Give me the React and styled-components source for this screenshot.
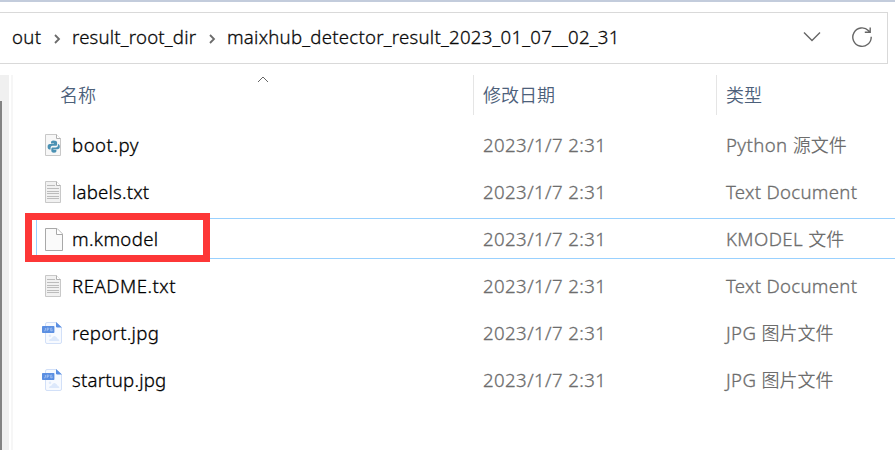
import React from "react";
import styled, { createGlobalStyle } from "styled-components";

const GlobalStyle = createGlobalStyle`
  * { box-sizing: border-box; }
  body {
    margin: 0;
    background: #fff;
    overflow: hidden;
    font-family: "Noto Sans", "Noto Sans CJK SC", sans-serif;
    font-size: 18.6px;
    font-weight: 350;
    -webkit-text-stroke-width: 0.3px;
  }
`;

const Window = styled.div`
  height: 450px;
  display: flex;
  flex-direction: column;
  border-top: 2px solid #c3ccdc;
`;

const AddressBar = styled.nav`
  height: 52px;
  margin: 10px 7px 0 0;
  padding-left: 12px;
  border: 1px solid #d9d9d9;
  border-left: 0;
  display: flex;
  align-items: center;
  color: #0a0a0a;
`;

const Crumb = styled.span`
  width: ${(p) => p.$width}px;
  line-height: 26px;
  margin-top: -2px;
  white-space: nowrap;
  letter-spacing: ${(p) => p.$spacing || 0}px;
`;

const CrumbArrow = styled.svg`
  width: 8px;
  height: 12px;
  flex: none;
  margin: 2px 11px 0 12px;
`;

const BarActions = styled.div`
  margin-left: auto;
  display: flex;
  align-items: center;
  gap: 30px;
  padding-right: 14px;
  margin-top: -2px;
`;

const Body = styled.div`
  flex: 1;
  margin-top: 11px;
  display: flex;
`;

const ScrollTrack = styled.div`
  width: 9px;
  padding-top: 26px;
  background: #f0f0f0;
  display: flex;
`;

const ScrollThumb = styled.div`
  width: 2px;
  background: #838383;
`;

const Divider = styled.div`
  width: 2px;
  margin-left: 2px;
  background: #f6f6f6;
`;

const Files = styled.main`
  flex: 1;
  padding-left: 23px;
`;

const Header = styled.div`
  height: 40px;
  display: grid;
  grid-template-columns: 437px 243px 1fr;
  color: #4c607a;
  font-size: 18px;
`;

const HeaderCell = styled.div`
  padding-left: ${(p) => (p.$first ? 24 : 9)}px;
  border-left: ${(p) => (p.$first ? 0 : 1)}px solid #e5e5e5;
  line-height: 38px;
  display: flex;
`;

const SortMark = styled.svg`
  width: 12px;
  height: 7px;
  margin-left: 161px;
  margin-top: 1px;
`;

const List = styled.div`
  display: flex;
  flex-direction: column;
  gap: 6px;
  padding-top: 9px;
`;

const Row = styled.div`
  position: relative;
  height: 41px;
  display: grid;
  grid-template-columns: 436px 243px 1fr;
  border: 1px solid ${(p) => (p.$selected ? "#99d1ff" : "transparent")};
  border-right: 0;
  color: #6d6d6d;
`;

const Cell = styled.div`
  padding-left: 10px;
  line-height: 39px;
  white-space: nowrap;
  letter-spacing: ${(p) => p.$spacing || 0}px;
`;

const NameCell = styled.div`
  display: flex;
  align-items: center;
  padding-left: 5px;
  color: #000;
`;

const FileIcon = styled.svg`
  width: 22px;
  height: 24px;
  margin-right: 8px;
`;

const FileName = styled.span`
  line-height: 39px;
  letter-spacing: ${(p) => p.$spacing || 0}px;
`;

const Chinese = styled.span`
  font-family: "Noto Sans CJK SC", sans-serif;
  font-size: 18px;
  letter-spacing: 0;
  -webkit-text-stroke-width: 0;
`;

const Highlight = styled.div`
  position: absolute;
  left: -12px;
  top: -6px;
  width: 185px;
  height: 49px;
  border: 7px solid #fd3737;
`;

function Page({ fill = "#f7f7f7" }) {
  return (
    <>
      <path d="M3.5 1.5H14.5L18.5 5.5V22.5H3.5Z" fill={fill} stroke="#c8c8c8" />
      <path d="M14.5 1.5V5.5H18.5" fill="#fff" stroke="#b0b0b0" />
    </>
  );
}

function Icon({ kind }) {
  if (kind === "jpg") {
    return (
      <FileIcon viewBox="0 0 22 24">
        <path d="M3.5 3Q3.5 1.5 5 1.5H14.5L19.5 6.5V21Q19.5 22.5 18 22.5H5Q3.5 22.5 3.5 21Z" fill="#f7faff" stroke="#d2e0f8" />
        <path d="M14 1L20 6.5H15.3Q14 6.5 14 5.2Z" fill="#5b8fe2" />
        <circle cx="8" cy="14.7" r="1.3" fill="#dfeafc" />
        <path d="M7 20Q7 17.8 9.5 17.4Q11 14 13.2 15.2Q15 16 15.4 17.5Q17.4 18 17.4 20Z" fill="#dce8fb" />
        <rect x="0" y="5" width="12.4" height="7" rx="0.7" fill="#5b8fe2" />
        <path d="M3.4 7V9.4Q3.4 10 2.2 9.8M5.2 10V7H6.4Q7.5 7.8 6.4 8.5H5.4M10.2 7.2H8.7V9.8H10.2V8.6H9.6" fill="none" stroke="#b8d0f6" strokeWidth="0.7" />
      </FileIcon>
    );
  }
  if (kind === "py") {
    return (
      <FileIcon viewBox="0 0 22 24">
        <Page />
        <g fill="#4a91b3" transform="translate(5.6 7.6)">
          <path d="M6 0C3.6 0 3.4 1 3.4 2V3H6.4V3.5H2.2C.8 3.5 0 4.5 0 6.2S.8 8.8 1.9 8.8H3V7.3C3 6 4 5.2 5 5.2H8C9 5.2 9.5 4.5 9.5 3.6V2C9.5 .8 8.2 0 6 0Z" />
          <path d="M6.2 12.2C8.6 12.2 8.8 11.2 8.8 10.2V9.2H5.8V8.7H10C11.4 8.7 12.2 7.7 12.2 6S11.4 3.4 10.3 3.4V5C10.3 6.2 9.2 7 8.2 7H5.2C4.2 7 3.7 7.7 3.7 8.6V10.2C3.7 11.4 4.8 12.2 6.2 12.2Z" />
        </g>
      </FileIcon>
    );
  }
  if (kind === "txt") {
    return (
      <FileIcon viewBox="0 0 22 24">
        <Page fill="#f1f1f1" />
        <path d="M5 5.5H13M5 8.5H17M5 11.5H17M5 13.5H17M5 16.5H17M5 18.5H17" stroke="#bcbcbc" />
      </FileIcon>
    );
  }
  return (
    <FileIcon viewBox="0 0 22 24">
      <path d="M3.5 1.5H15L20.5 7V23.5H3.5Z" fill="#fafafa" stroke="#a8a8a8" />
      <path d="M14.5 1.5V7.5H20.5" fill="#fff" stroke="#a8a8a8" />
    </FileIcon>
  );
}

const files = [
  { name: "boot.py", spacing: 0.5, kind: "py", type: "Python ", zh: "源文件" },
  { name: "labels.txt", spacing: 0.2, kind: "txt", type: "Text Document" },
  { name: "m.kmodel", spacing: 0.35, kind: "file", type: "KMODEL ", zh: "文件", selected: true },
  { name: "README.txt", spacing: 0.5, kind: "txt", type: "Text Document" },
  { name: "report.jpg", spacing: 0.3, kind: "jpg", type: "JPG ", zh: "图片文件" },
  { name: "startup.jpg", spacing: 0.22, kind: "jpg", type: "JPG ", zh: "图片文件" },
];

function Arrow() {
  return (
    <CrumbArrow viewBox="0 0 8 12">
      <path d="M2 2L6 6L2 10" fill="none" stroke="#6b6b6b" strokeWidth="1.8" />
    </CrumbArrow>
  );
}

export default function App() {
  return (
    <Window>
      <GlobalStyle />
      <AddressBar>
        <Crumb $width={29} $spacing={0.3}>out</Crumb>
        <Arrow />
        <Crumb $width={124} $spacing={0.2}>result_root_dir</Crumb>
        <Arrow />
        <Crumb $width={392} $spacing={0.25}>maixhub_detector_result_2023_01_07__02_31</Crumb>
        <BarActions>
          <svg width="18" height="12" viewBox="0 0 18 12">
            <path d="M1 1.5L9 9.5L17 1.5" fill="none" stroke="#666" strokeWidth="1.4" />
          </svg>
          <svg width="22" height="22" viewBox="0 0 22 22">
            <path d="M20.2 10.8A9.2 9.2 0 1 1 17.6 4.7L19 6M19.2 1.5V6.3H13.8" fill="none" stroke="#666" strokeWidth="1.4" />
          </svg>
        </BarActions>
      </AddressBar>
      <Body>
        <ScrollTrack><ScrollThumb /></ScrollTrack>
        <Divider />
        <Files>
          <Header>
            <HeaderCell $first>
              <Chinese>名称</Chinese>
              <SortMark viewBox="0 0 12 7">
                <path d="M1 6L6 1L11 6" fill="none" stroke="#666" />
              </SortMark>
            </HeaderCell>
            <HeaderCell><Chinese>修改日期</Chinese></HeaderCell>
            <HeaderCell><Chinese>类型</Chinese></HeaderCell>
          </Header>
          <List>
            {files.map((f) => (
              <Row key={f.name} $selected={f.selected}>
                <NameCell>
                  <Icon kind={f.kind} />
                  <FileName $spacing={f.spacing}>{f.name}</FileName>
                </NameCell>
                <Cell $spacing={0.42}>2023/1/7 2:31</Cell>
                <Cell $spacing={f.zh ? 0.4 : 0.3}>{f.type}{f.zh && <Chinese>{f.zh}</Chinese>}</Cell>
                {f.selected && <Highlight />}
              </Row>
            ))}
          </List>
        </Files>
      </Body>
    </Window>
  );
}
